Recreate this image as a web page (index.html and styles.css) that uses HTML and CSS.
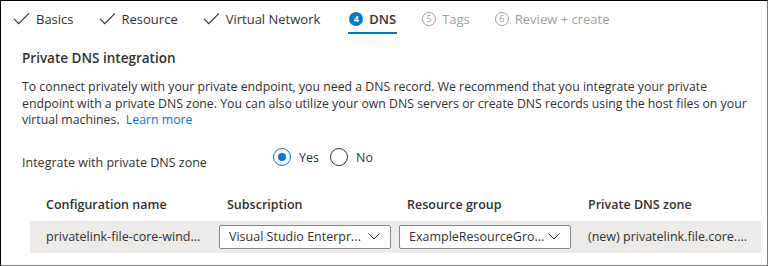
FILE: index.html
```html
<!DOCTYPE html>
<html lang="en">
<head>
  <meta charset="UTF-8">
  <title>Create a private endpoint - DNS</title>
  <link rel="stylesheet" href="styles.css">
</head>
<body>
  <div class="frame">
    <nav class="steps">
      <div class="step done">
        <svg class="check" viewBox="0 0 18 14"><path d="M1 7.5 L6 12.5 L17 1.5"/></svg>
        <span>Basics</span>
      </div>
      <div class="step done">
        <svg class="check" viewBox="0 0 18 14"><path d="M1 7.5 L6 12.5 L17 1.5"/></svg>
        <span>Resource</span>
      </div>
      <div class="step done">
        <svg class="check" viewBox="0 0 18 14"><path d="M1 7.5 L6 12.5 L17 1.5"/></svg>
        <span>Virtual Network</span>
      </div>
      <div class="step active">
        <span class="num">4</span>
        <span>DNS</span>
      </div>
      <div class="step todo">
        <span class="num">5</span>
        <span>Tags</span>
      </div>
      <div class="step todo">
        <span class="num">6</span>
        <span>Review + create</span>
      </div>
    </nav>

    <div class="content">
      <h2>Private DNS integration</h2>
      <p class="intro">
        To connect privately with your private endpoint, you need a DNS record. We recommend that you integrate your private<br>
        endpoint with a private DNS zone. You can also utilize your own DNS servers or create DNS records using the host files on your<br>
        virtual machines. <a href="#">Learn more</a>
      </p>

      <div class="field">
        <span class="field-label">Integrate with private DNS zone</span>
        <div class="radios">
          <label class="radio checked"><span class="dot"></span>Yes</label>
          <label class="radio"><span class="dot"></span>No</label>
        </div>
      </div>

      <div class="grid">
        <div class="row head">
          <div class="cell">Configuration name</div>
          <div class="cell">Subscription</div>
          <div class="cell">Resource group</div>
          <div class="cell">Private DNS zone</div>
        </div>
        <div class="row body">
          <div class="cell">privatelink-file-core-wind...</div>
          <div class="cell">
            <div class="select">
              <span>Visual Studio Enterpr...</span>
              <svg class="chev" viewBox="0 0 12 7"><path d="M0.5 0.5 L6 6 L11.5 0.5"/></svg>
            </div>
          </div>
          <div class="cell">
            <div class="select">
              <span>ExampleResourceGro...</span>
              <svg class="chev" viewBox="0 0 12 7"><path d="M0.5 0.5 L6 6 L11.5 0.5"/></svg>
            </div>
          </div>
          <div class="cell">(new) privatelink.file.core....</div>
        </div>
      </div>
    </div>
  </div>
</body>
</html>
```

FILE: styles.css
```css
body {
  margin: 0;
  font-family: "Open Sans", "Noto Sans", sans-serif;
  color: #323130;
  background-color: white;
}
.frame {
  box-sizing: border-box;
  width: 768px;
  height: 266px;
  border-left: 1px solid #000;
  border-top: 1px solid #000;
  border-right: 1px solid #7a7a7a;
  border-bottom: 1px solid #7a7a7a;
  overflow: hidden;
}
.steps {
  display: flex;
  gap: 25px;
  padding-left: 12px;
  height: 33px;
}
.step {
  box-sizing: border-box;
  display: flex;
  align-items: center;
  gap: 6px;
  font-size: 13px;
  height: 33px;
  padding-top: 4px;
  border-bottom: 2px solid transparent;
}
.step.active {
  border-bottom-color: #0078d4;
  margin-left: 3px;
  padding-left: 1px;
  padding-right: 1px;
  font-weight: 600;
}
.step.todo {
  color: #a19f9d;
}
.check {
  width: 17px;
  height: 13px;
  fill: none;
  stroke: #323130;
  stroke-width: 1.2;
}
.num {
  box-sizing: border-box;
  width: 14px;
  height: 14px;
  border-radius: 50%;
  display: flex;
  align-items: center;
  justify-content: center;
  font-size: 9px;
  font-weight: 700;
}
.active .num {
  background-color: #0078d4;
  color: white;
}
.todo .num {
  border: 1px solid #a19f9d;
  font-weight: 400;
}
.content {
  padding: 0 0 0 21px;
}
h2 {
  margin: 15px 0 0 0;
  font-size: 13.5px;
  font-weight: 600;
  line-height: 18px;
}
.intro {
  margin: 12px 0 0 0;
  font-size: 12.3px;
  line-height: 16.5px;
  white-space: nowrap;
}
.intro a {
  color: #0078d4;
  text-decoration: none;
  margin-left: 3px;
}
.field {
  display: flex;
  align-items: center;
  margin-top: 20px;
  font-size: 12.5px;
}
.field-label {
  width: 251px;
  padding-top: 5px;
}
.radios {
  display: flex;
  gap: 11px;
  margin-top: -5px;
}
.radio {
  display: flex;
  align-items: center;
  gap: 8px;
}
.dot {
  box-sizing: border-box;
  width: 18px;
  height: 18px;
  border-radius: 50%;
  border: 1px solid #323130;
  position: relative;
}
.radio.checked .dot {
  border-color: #0078d4;
}
.radio.checked .dot::after {
  content: "";
  position: absolute;
  left: 4px;
  top: 4px;
  width: 8px;
  height: 8px;
  border-radius: 50%;
  background-color: #0078d4;
}
.grid {
  margin: 21px 6px 0 8px;
  font-size: 12.5px;
}
.row {
  display: grid;
  grid-template-columns: 189px 180px 189px 1fr;
  align-items: center;
}
.row.head {
  font-weight: 600;
  height: 26px;
}
.row.body {
  background-color: #edebe9;
  height: 32px;
  margin-top: 3px;
}
.cell {
  padding-left: 16px;
  white-space: nowrap;
}
.row.head .cell:nth-child(2),
.row.head .cell:nth-child(3) {
  padding-left: 8px;
}
.row.body .cell:nth-child(2),
.row.body .cell:nth-child(3),
.row .cell:nth-child(4) {
  padding-left: 0;
}
.select {
  box-sizing: border-box;
  display: flex;
  justify-content: space-between;
  align-items: center;
  width: 172px;
  height: 24px;
  padding: 0 10px 0 9px;
  background-color: white;
  border: 1px solid #8a8886;
  border-radius: 2px;
}
.chev {
  width: 12px;
  height: 7px;
  fill: none;
  stroke: #323130;
  stroke-width: 1;
}
```
